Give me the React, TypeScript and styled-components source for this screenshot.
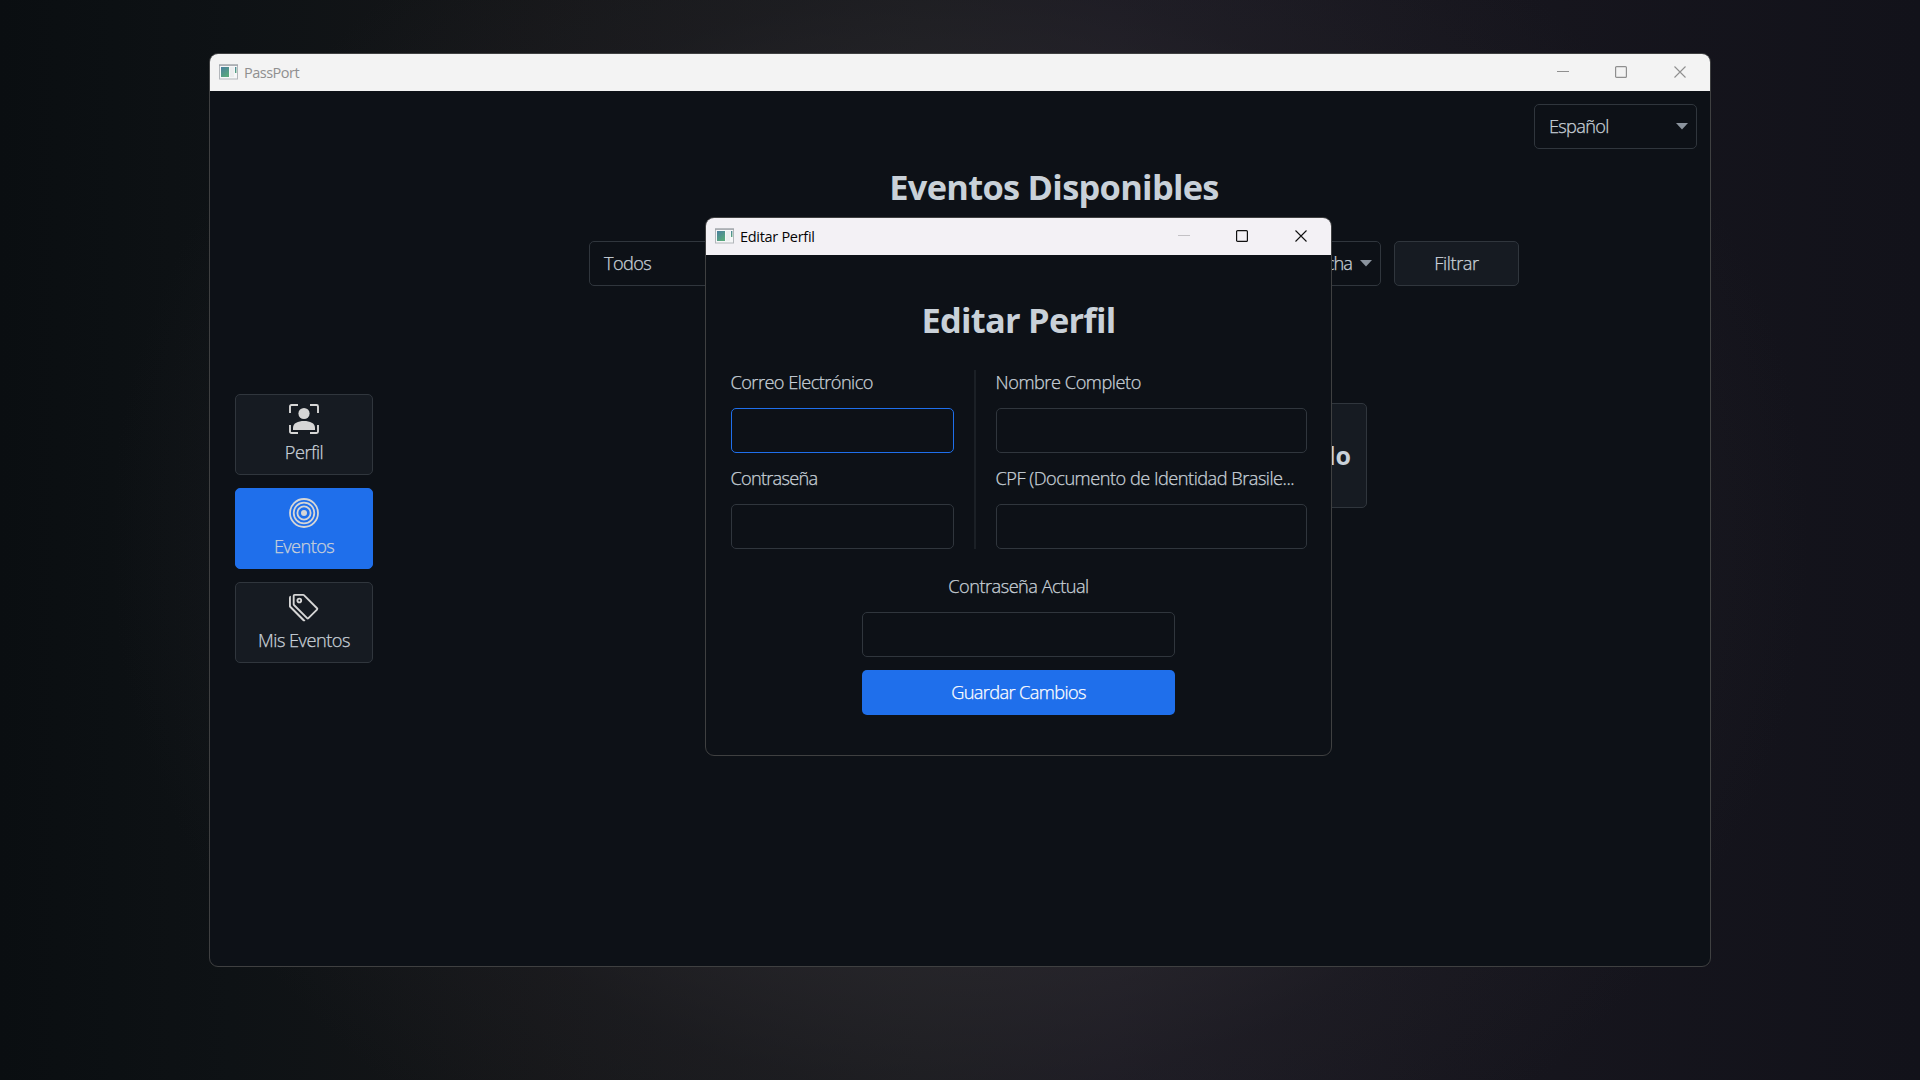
import React from "react";
import styled, { createGlobalStyle } from "styled-components";

const Global = createGlobalStyle`
  * { box-sizing: border-box; }
  html, body { margin: 0; padding: 0; background: #0b0e12; }
  body { overflow: hidden; font-family: "Open Sans", "Noto Sans", sans-serif; }
`;

const Desktop = styled.div`
  position: relative;
  width: 1920px;
  height: 1080px;
  padding: 53px 0 0 209px;
  background:
    radial-gradient(ellipse 850px 740px at 960px 540px, #2e2d31 0%, rgba(45, 43, 48, 0.75) 50%, rgba(35, 34, 40, 0.35) 75%, rgba(24, 23, 30, 0) 100%),
    linear-gradient(90deg, #0a0e11 0%, #0e1215 12%, #151618 28%, #1b1c1f 48%, #1d1b24 58%, #17161e 75%, #12121a 100%);
`;

const Window = styled.section<{ $w: number; $h: number }>`
  width: ${p => p.$w}px;
  height: ${p => p.$h}px;
  display: flex;
  flex-direction: column;
  border: 1px solid #3f4041;
  border-radius: 9px;
  background: #0d1117;
  overflow: hidden;
`;

const DialogLayer = styled.div`
  position: absolute;
  left: 705px;
  top: 217px;
`;

const TitleBar = styled.header<{ $active?: boolean }>`
  flex: none;
  height: 37px;
  display: flex;
  align-items: center;
  padding: 0 24px 0 9px;
  background: ${p => (p.$active ? "#f3f1f5" : "#f3f3f3")};
  color: ${p => (p.$active ? "#050505" : "#8f8f8f")};
`;

const TitleText = styled.span<{ $ls: number }>`
  margin-left: 5px;
  flex: 1;
  font-size: 14.5px;
  line-height: 20px;
  letter-spacing: ${p => p.$ls}px;
  white-space: nowrap;
`;

const Controls = styled.div`
  display: flex;
  align-items: center;
  gap: 47px;
  padding-bottom: 1px;
  svg { display: block; }
  svg:first-child { margin-right: -1px; }
`;

const MainBody = styled.div`
  flex: 1;
  display: grid;
  grid-template-columns: 188px 1fr;
`;

const Sidebar = styled.nav`
  display: flex;
  flex-direction: column;
  justify-content: center;
  gap: 13px;
  padding-left: 25px;
`;

const NavButton = styled.button<{ $active?: boolean }>`
  width: 138px;
  height: 81px;
  padding: 9px 0 0;
  display: flex;
  flex-direction: column;
  align-items: center;
  gap: 6px;
  font-family: inherit;
  border: 1px solid ${p => (p.$active ? "#1f6feb" : "#30363d")};
  border-radius: 5px;
  background: ${p => (p.$active ? "#1f6feb" : "#161b22")};
  color: #c9d1d9;
  svg { display: block; }
`;

const Text = styled.span<{ $ls?: number; $color?: string }>`
  font-size: 18.2px;
  font-weight: 300;
  line-height: 25px;
  letter-spacing: ${p => p.$ls ?? -0.52}px;
  color: ${p => p.$color ?? "#c9d1d9"};
  -webkit-text-stroke: 0.25px currentColor;
  white-space: nowrap;
`;

const Content = styled.main`
  display: flex;
  flex-direction: column;
  align-items: center;
`;

const LanguageRow = styled.div`
  width: 100%;
  display: flex;
  justify-content: flex-end;
  padding: 13px 13px 0 0;
`;

const Combo = styled.div<{ $w: number; $end?: boolean }>`
  width: ${p => p.$w}px;
  height: 45px;
  display: flex;
  align-items: center;
  justify-content: ${p => (p.$end ? "flex-end" : "space-between")};
  gap: 8px;
  padding: 0 8px 0 14px;
  border: 1px solid #30363d;
  border-radius: 5px;
  background: #0d1117;
`;

const Heading = styled.h1<{ $ls: number; $mt: number }>`
  margin: ${p => p.$mt}px 0 0;
  font-size: 34.4px;
  font-weight: 700;
  line-height: 46px;
  letter-spacing: ${p => p.$ls}px;
  color: #c9d1d9;
  text-align: center;
  white-space: nowrap;
`;

const Filters = styled.div`
  display: flex;
  gap: 13px;
  margin-top: 31px;
`;

const FilterButton = styled.button`
  width: 125px;
  height: 45px;
  padding: 0;
  font-family: inherit;
  border: 1px solid #30363d;
  border-radius: 5px;
  background: #161b22;
`;

const EmptyCard = styled.div`
  width: 626px;
  height: 105px;
  margin-top: 117px;
  padding: 0 15px 2px 0;
  display: flex;
  align-items: center;
  justify-content: flex-end;
  border: 1px solid #30363d;
  border-radius: 5px;
  background: #161b22;
  color: #c9d1d9;
  font-size: 25px;
  line-height: 20px;
  font-weight: 700;
`;

const DialogBody = styled.div`
  flex: 1;
  display: flex;
  flex-direction: column;
  align-items: center;
`;

const FormGrid = styled.div`
  display: grid;
  grid-template-columns: 223px 2px 311px;
  column-gap: 20px;
  margin-top: 27px;
`;

const Divider = styled.div`
  background: #1b2026;
`;

const Column = styled.div<{ $center?: boolean }>`
  display: flex;
  flex-direction: column;
  gap: 13px;
  align-items: ${p => (p.$center ? "center" : "stretch")};
  margin-top: ${p => (p.$center ? 25 : 0)}px;
`;

const Input = styled.input<{ $focus?: boolean; $w?: string }>`
  width: ${p => p.$w ?? "100%"};
  height: 45px;
  border: 1px solid ${p => (p.$focus ? "#1f6feb" : "#30363d")};
  border-radius: 5px;
  background: #0d1117;
  outline: none;
`;

const SaveButton = styled.button`
  width: 313px;
  height: 45px;
  padding: 0;
  font-family: inherit;
  border: 0;
  border-radius: 5px;
  background: #1f6feb;
`;

const AppIcon = () => (
  <svg width="20" height="17" viewBox="0 0 20 17">
    <defs>
      <linearGradient id="pane" x1="0" y1="0" x2="0.6" y2="1">
        <stop offset="0" stopColor="#4b7f9f" />
        <stop offset="1" stopColor="#58a87c" />
      </linearGradient>
    </defs>
    <rect x="0.5" y="1" width="18" height="14" fill="#f6f7f8" stroke="#b3b7bb" />
    <rect x="0" y="0.5" width="19" height="1.2" fill="#9a9fa4" />
    <rect x="2" y="3" width="8" height="10" fill="url(#pane)" />
    <rect x="11" y="3" width="4" height="10" fill="#eceeef" />
    <rect x="16" y="3" width="1.4" height="6" fill="url(#pane)" />
  </svg>
);

const WindowControls = ({ color, min }: { color: string; min: string }) => (
  <Controls>
    <svg width="12" height="12"><rect y="5" width="12" height="1" fill={min} /></svg>
    <svg width="12" height="12"><rect x="0.6" y="0.6" width="10.8" height="10.8" rx="1" fill="none" stroke={color} strokeWidth="1.2" /></svg>
    <svg width="12" height="12"><path d="M.5 .5L11.5 11.5M11.5 .5L.5 11.5" stroke={color} strokeWidth="1.1" /></svg>
  </Controls>
);

const Arrow = () => (
  <svg width="12" height="7"><path d="M0 0H12L6 6.5Z" fill="#8b949e" /></svg>
);

const ProfileIcon = () => (
  <svg width="30" height="30" viewBox="0 0 30 30" fill="none" stroke="#d6d6d6" strokeWidth="1.9">
    <path d="M1 9V2.5Q1 1 2.5 1H9M21 1H27.5Q29 1 29 2.5V9M29 21V27.5Q29 29 27.5 29H21M9 29H2.5Q1 29 1 27.5V21" />
    <circle cx="15" cy="9.5" r="5.6" fill="#d6d6d6" stroke="none" />
    <path d="M4 26V24C4 19 9 17 15 17S26 19 26 24V26Z" fill="#d6d6d6" stroke="none" />
  </svg>
);

const TargetIcon = () => (
  <svg width="30" height="30" viewBox="0 0 30 30" fill="none" stroke="#d6d6d6" strokeWidth="1.8">
    <circle cx="15" cy="15" r="14" />
    <circle cx="15" cy="15" r="10.3" />
    <circle cx="15" cy="15" r="6.6" />
    <circle cx="15" cy="15" r="3" fill="#d6d6d6" stroke="none" />
  </svg>
);

const TagsIcon = () => (
  <svg width="30" height="30" viewBox="0 0 16 16" fill="#d6d6d6">
    <path d="M3 2v4.586l7 7L14.586 9l-7-7H3zM2 2a1 1 0 0 1 1-1h4.586a1 1 0 0 1 .707.293l7 7a1 1 0 0 1 0 1.414l-4.586 4.586a1 1 0 0 1-1.414 0l-7-7A1 1 0 0 1 2 6.586V2z" />
    <path d="M5.5 5a.5.5 0 1 1 0-1 .5.5 0 0 1 0 1zm0 1a1.5 1.5 0 1 0 0-3 1.5 1.5 0 0 0 0 3zM1 7.086a1 1 0 0 0 .293.707L8.75 15.25l-.043.043a1 1 0 0 1-1.414 0l-7-7A1 1 0 0 1 0 7.586V3a1 1 0 0 1 1-1v5.086z" />
  </svg>
);

export default function App() {
  return (
    <Desktop>
      <Global />
      <Window $w={1502} $h={914}>
        <TitleBar>
          <AppIcon />
          <TitleText $ls={-0.5}>PassPort</TitleText>
          <WindowControls color="#8f8f8f" min="#8f8f8f" />
        </TitleBar>
        <MainBody>
          <Sidebar>
            <NavButton><ProfileIcon /><Text>Perfil</Text></NavButton>
            <NavButton $active><TargetIcon /><Text $ls={-0.6}>Eventos</Text></NavButton>
            <NavButton><TagsIcon /><Text $ls={-0.5}>Mis Eventos</Text></NavButton>
          </Sidebar>
          <Content>
            <LanguageRow>
              <Combo $w={163}><Text $ls={-0.7}>Español</Text><Arrow /></Combo>
            </LanguageRow>
            <Heading $ls={-0.7} $mt={15}>Eventos Disponibles</Heading>
            <Filters>
              <Combo $w={380}><Text $ls={-0.6}>Todos</Text></Combo>
              <Combo $w={399} $end><Text $ls={-0.9}>Fecha</Text><Arrow /></Combo>
              <FilterButton><Text $ls={-0.4}>Filtrar</Text></FilterButton>
            </Filters>
            <EmptyCard>Ningún evento encontrado</EmptyCard>
          </Content>
        </MainBody>
      </Window>
      <DialogLayer>
        <Window $w={627} $h={539}>
          <TitleBar $active>
            <AppIcon />
            <TitleText $ls={-0.3}>Editar Perfil</TitleText>
            <WindowControls color="#111111" min="#c3c1c5" />
          </TitleBar>
          <DialogBody>
            <Heading $ls={-0.75} $mt={42}>Editar Perfil</Heading>
            <FormGrid>
              <Column>
                <Text $ls={-0.55}>Correo Electrónico</Text><Input $focus />
                <Text $ls={-0.75}>Contraseña</Text><Input />
              </Column>
              <Divider />
              <Column>
                <Text $ls={-0.45}>Nombre Completo</Text><Input />
                <Text $ls={-0.5}>CPF (Documento de Identidad Brasile...</Text><Input />
              </Column>
            </FormGrid>
            <Column $center>
              <Text>Contraseña Actual</Text>
              <Input $w="313px" />
              <SaveButton><Text $ls={-0.62} $color="#ffffff">Guardar Cambios</Text></SaveButton>
            </Column>
          </DialogBody>
        </Window>
      </DialogLayer>
    </Desktop>
  );
}
